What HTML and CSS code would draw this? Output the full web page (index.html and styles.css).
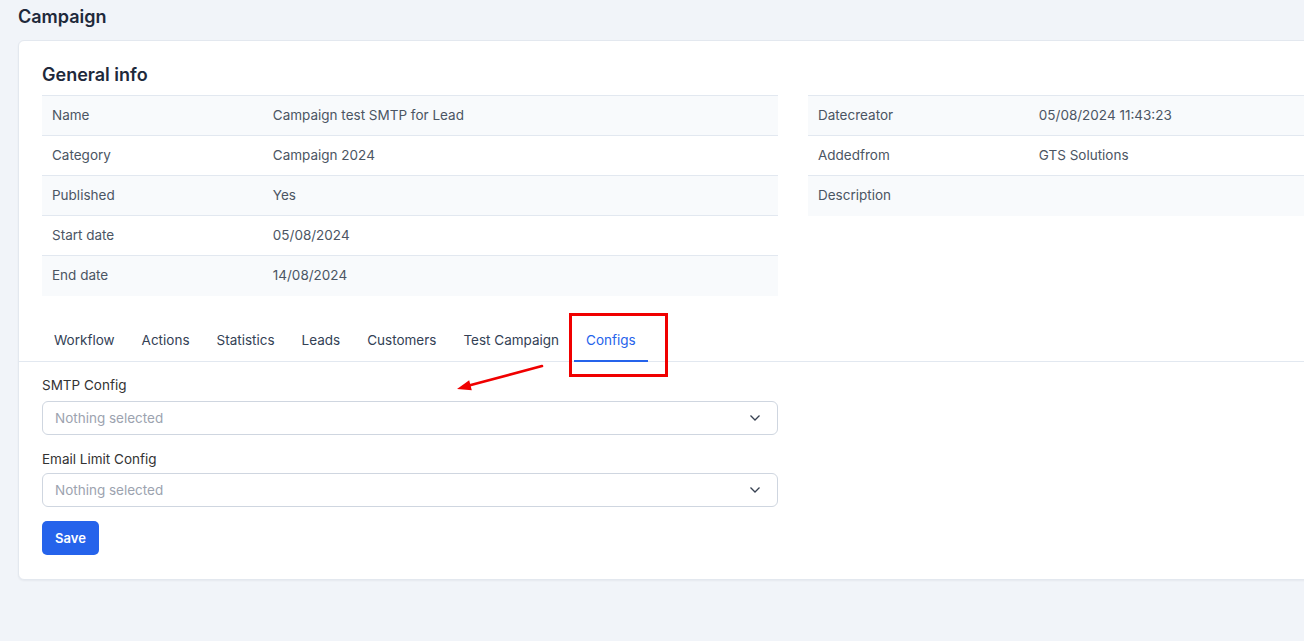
FILE: index.html
```html
<!DOCTYPE html>
<html lang="en">
<head>
<meta charset="utf-8">
<title>Campaign</title>
<link rel="stylesheet" href="styles.css">
</head>
<body>
<div class="page">
  <h1 class="page-title">Campaign</h1>
  <div class="card">
    <h2 class="card-title">General info</h2>
    <div class="info-grid">
      <table class="info-table">
        <tr><td class="lbl">Name</td><td>Campaign test SMTP for Lead</td></tr>
        <tr><td class="lbl">Category</td><td>Campaign 2024</td></tr>
        <tr><td class="lbl">Published</td><td>Yes</td></tr>
        <tr><td class="lbl">Start date</td><td>05/08/2024</td></tr>
        <tr><td class="lbl">End date</td><td>14/08/2024</td></tr>
      </table>
      <table class="info-table">
        <tr><td class="lbl">Datecreator</td><td>05/08/2024 11:43:23</td></tr>
        <tr><td class="lbl">Addedfrom</td><td>GTS Solutions</td></tr>
        <tr><td class="lbl">Description</td><td></td></tr>
      </table>
    </div>

    <div class="tabs-wrap">
      <ul class="tabs">
        <li class="tab">Workflow</li>
        <li class="tab">Actions</li>
        <li class="tab">Statistics</li>
        <li class="tab">Leads</li>
        <li class="tab">Customers</li>
        <li class="tab">Test Campaign</li>
        <li class="tab active">Configs</li>
      </ul>
      <div class="highlight-box"></div>
      <svg class="arrow" width="100" height="36" viewBox="0 0 100 36">
        <line x1="89" y1="3" x2="16" y2="22.5" stroke="#f00000" stroke-width="2.6" stroke-linecap="round"/>
        <polygon points="4,26 16.2,17.3 18.8,27.3" fill="#f00000"/>
      </svg>
    </div>

    <form class="config-form">
      <div class="form-group first">
        <label class="form-label">SMTP Config</label>
        <div class="select">
          <span class="placeholder">Nothing selected</span>
          <svg class="chev" width="12" height="8" viewBox="0 0 12 8"><path d="M1.5 1.5 L6 6 L10.5 1.5" fill="none" stroke="#374151" stroke-width="1.3"/></svg>
        </div>
      </div>
      <div class="form-group">
        <label class="form-label">Email Limit Config</label>
        <div class="select">
          <span class="placeholder">Nothing selected</span>
          <svg class="chev" width="12" height="8" viewBox="0 0 12 8"><path d="M1.5 1.5 L6 6 L10.5 1.5" fill="none" stroke="#374151" stroke-width="1.3"/></svg>
        </div>
      </div>
      <button type="button" class="btn-save">Save</button>
    </form>
  </div>
</div>
</body>
</html>
```
FILE: styles.css
```css
* { box-sizing: border-box; }
html, body { margin: 0; padding: 0; }
body {
  background: #f1f4f9;
  font-family: Inter, "Noto Sans", sans-serif;
  color: #334155;
  overflow: hidden;
  width: 1304px;
  height: 641px;
}
.page {
  padding: 5px 0 0 18px;
}
.page-title {
  margin: 0;
  font-size: 18px;
  line-height: 24px;
  font-weight: 600;
  color: #1e293b;
}
.card {
  margin-top: 11px;
  width: 1550px;
  background: #fff;
  border: 1px solid #e3e8ef;
  border-radius: 6px;
  padding: 23px 23px 24px 23px;
  box-shadow: 0 1px 2px rgba(15, 23, 42, 0.05);
}
.card-title {
  margin: 0 0 9px 0;
  font-size: 18px;
  line-height: 22px;
  font-weight: 600;
  color: #1e293b;
}
.info-grid {
  display: grid;
  grid-template-columns: 736px 736px;
  column-gap: 30px;
  align-items: start;
}
.info-table {
  width: 100%;
  border-collapse: collapse;
  font-size: 13.5px;
  line-height: 18px;
  color: #4b5563;
}
.info-table td {
  border-top: 1px solid #e2e8f0;
  height: 40px;
  padding: 0 10px 1px;
  vertical-align: middle;
}
.info-table tr:nth-child(odd) td { background: #f8fafc; }
.info-table td.lbl { width: 30%; }

.tabs-wrap {
  position: relative;
  margin-top: 24px;
  border-bottom: 1px solid #e2e8f0;
  margin-left: -23px;
  margin-right: -23px;
  padding-left: 23px;
}
.tabs {
  list-style: none;
  margin: 0;
  padding: 0;
  display: flex;
  gap: 3px;
}
.tab {
  padding: 10px 12px 10px;
  font-size: 13.5px;
  line-height: 20px;
  color: #334155;
  border-bottom: 2px solid transparent;
  margin-bottom: -1px;
}
.tab.active {
  color: #2563eb;
  border-bottom-color: #2563eb;
}
.highlight-box {
  position: absolute;
  left: 550px;
  top: -7px;
  width: 99px;
  height: 64px;
  border: 3px solid #f00000;
}
.arrow {
  position: absolute;
  left: 434px;
  top: 43px;
}

.config-form {
  width: 736px;
  padding-top: 13px;
}
.form-group { margin-bottom: 14px; }
.form-label {
  display: block;
  font-size: 13.5px;
  line-height: 20px;
  color: #333;
  margin-bottom: 4px;
}
.form-group.first .form-label { margin-bottom: 6px; }
.select {
  display: flex;
  align-items: center;
  justify-content: space-between;
  height: 34px;
  border: 1px solid #cfd6e0;
  border-radius: 6px;
  padding: 0 16px 0 12px;
  background: #fff;
}
.placeholder {
  font-size: 13.5px;
  color: #9ca3af;
}
.chev { display: block; }
.btn-save {
  margin-top: 2px;
  height: 34px;
  width: 57px;
  border: none;
  border-radius: 5px;
  background: #2563eb;
  color: #fff;
  font-family: Inter, "Noto Sans", sans-serif;
  font-size: 13px;
  font-weight: 600;
  padding: 0;
  display: block;
}
```
